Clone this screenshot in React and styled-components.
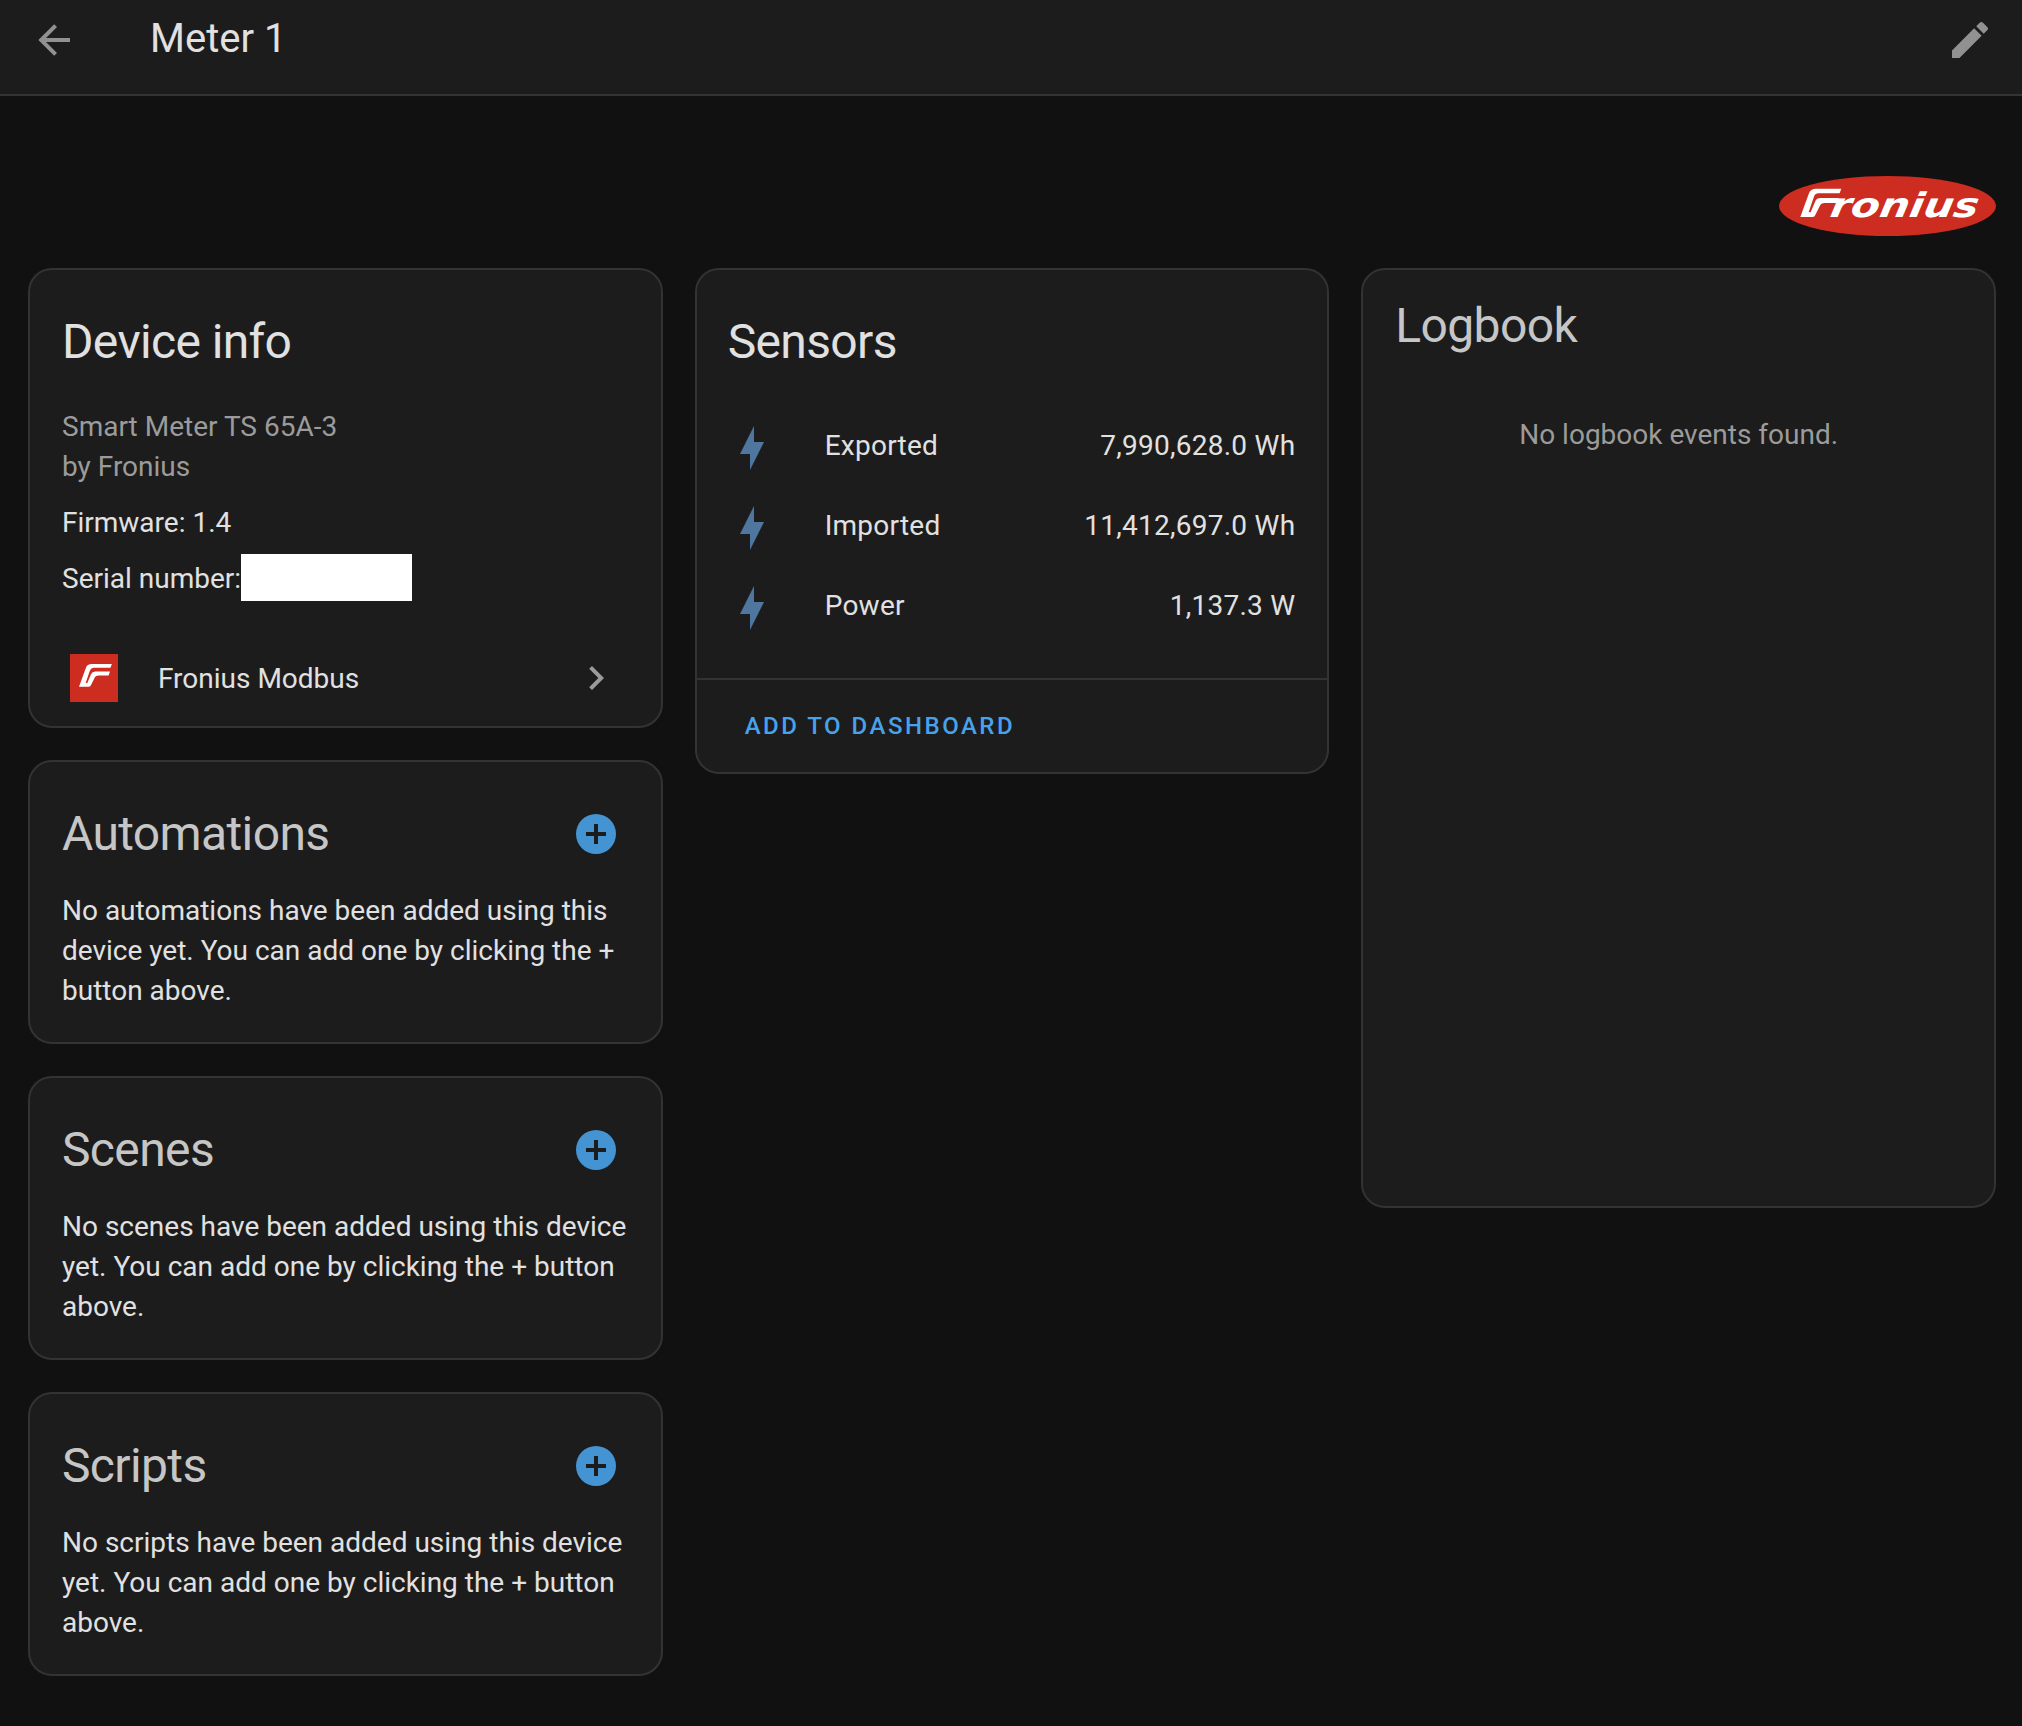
import React from "react";
import styled, { createGlobalStyle } from "styled-components";

const GlobalStyle = createGlobalStyle`
  *, *::before, *::after { box-sizing: border-box; }
  body {
    margin: 0;
    background: #111111;
    color: #e1e1e1;
    font-family: Roboto, "Liberation Sans", sans-serif;
    font-size: 28px;
    line-height: 40px;
    -webkit-font-smoothing: antialiased;
  }
  h1, h2, p { margin: 0; font-weight: 400; }
`;

const Page = styled.div`
  display: flex;
  flex-direction: column;
  min-height: 1726px;
`;

const Toolbar = styled.header`
  display: flex;
  align-items: flex-start;
  height: 96px;
  padding: 16px 28px 0 30px;
  background: #1c1c1c;
  border-bottom: 2px solid #333333;
`;

const IconButton = styled.button`
  display: flex;
  flex: none;
  padding: 0;
  border: 0;
  background: none;
  color: ${(p) => p.$color || "#919191"};
`;

const PageTitle = styled.h1`
  flex: 1;
  margin-left: 72px;
  font-size: 40px;
  line-height: 46px;
`;

const Main = styled.main`
  display: flex;
  flex-direction: column;
  gap: 32px;
  padding: 80px 26px 48px 28px;
`;

const BrandRow = styled.div`
  display: flex;
  justify-content: flex-end;
  height: 60px;
`;

const Columns = styled.div`
  display: grid;
  grid-template-columns: repeat(3, minmax(0, 1fr));
  align-items: start;
  column-gap: 32px;
`;

const Column = styled.div`
  display: flex;
  flex-direction: column;
  gap: 32px;
`;

const Card = styled.section`
  display: flex;
  flex-direction: column;
  height: ${(p) => p.$height || "auto"};
  background: #1c1c1c;
  border: 2px solid #333333;
  border-radius: 24px;
`;

const CardHeader = styled.div`
  display: flex;
  align-items: center;
  justify-content: space-between;
  padding: ${(p) => (p.$compact ? "8px" : "24px")} 41px 0 ${(p) => p.$inset || "32px"};
`;

const CardTitle = styled.h2`
  font-size: 48px;
  line-height: 96px;
  letter-spacing: -0.63px;
  color: ${(p) => (p.$dim ? "#c6c6c6" : "#e1e1e1")};
`;

const CardText = styled.p`
  padding: 9px 32px 31px;
`;

const InfoList = styled.div`
  display: flex;
  flex-direction: column;
  gap: 16px;
  padding: 17px 32px 0;
`;

const Model = styled.div`
  color: #9b9b9b;
`;

const InfoLine = styled.div`
  display: flex;
  align-items: flex-start;
  height: 40px;
  white-space: nowrap;
`;

const Redacted = styled.span`
  width: 171px;
  height: 47px;
  margin-top: -5px;
  background: #ffffff;
`;

const IntegrationRow = styled.a`
  display: flex;
  align-items: center;
  height: 96px;
  margin-top: 31px;
  padding: 0 41px 0 40px;
`;

const IntegrationName = styled.span`
  flex: 1;
  margin-left: 40px;
  padding-top: 1px;
`;

const SensorList = styled.div`
  display: flex;
  flex-direction: column;
  padding: 18px 32px 30px 15px;
  border-bottom: 2px solid #333333;
  letter-spacing: 0.25px;
`;

const SensorRow = styled.div`
  display: flex;
  align-items: center;
  height: 80px;
`;

const SensorBadge = styled.div`
  display: flex;
  flex: none;
  justify-content: center;
  width: 80px;
  color: #4f769f;
`;

const SensorName = styled.span`
  flex: 1;
  margin: 0 0 5px 33px;
`;

const SensorValue = styled.span`
  margin-bottom: 5px;
`;

const CardActions = styled.div`
  display: flex;
  align-items: center;
  height: 92px;
  padding: 0 48px;
`;

const TextButton = styled.button`
  padding: 0;
  border: 0;
  background: none;
  color: #48a2eb;
  font: 500 24px/40px Roboto, "Liberation Sans", sans-serif;
  letter-spacing: 2.5px;
  text-transform: uppercase;
`;

const EmptyNote = styled.p`
  padding-top: 41px;
  color: #9b9b9b;
  text-align: center;
`;

const paths = {
  back: "M20,11V13H8L13.5,18.5L12.08,19.92L4.16,12L12.08,4.08L13.5,5.5L8,11H20Z",
  pencil:
    "M20.71,7.04C21.1,6.65 21.1,6 20.71,5.63L18.37,3.29C18,2.9 17.35,2.9 16.96,3.29L15.12,5.12L18.87,8.87M3,17.25V21H6.75L17.81,9.93L14.06,6.18L3,17.25Z",
  chevron: "M8.59,16.58L13.17,12L8.59,7.41L10,6L16,12L10,18L8.59,16.58Z",
  plusCircle:
    "M17,13H13V17H11V13H7V11H11V7H13V11H17M12,2A10,10 0 0,0 2,12A10,10 0 0,0 12,22A10,10 0 0,0 22,12A10,10 0 0,0 12,2Z",
  bolt: "M11 15H6L13 1V9H18L11 23V15Z",
};

const Icon = ({ name }) => (
  <svg width="48" height="48" viewBox="0 0 24 24" fill="currentColor" aria-hidden="true">
    <path d={paths[name]} />
  </svg>
);

const Emblem = ({ transform }) => (
  <path
    transform={transform}
    fill="#ffffff"
    d="M0,85L26,14Q31,0 47,0L123,0L118,14L55,14Q45,14 41,24L25,71L31,71L45,38Q49,28 61,28L116,28L111,43L73,43Q63,43 60,49L45,79Q43,85 37,85Z"
  />
);

const BrandLogo = () => (
  <svg width="217" height="60" viewBox="0 0 217 60" role="img" aria-label="Fronius">
    <ellipse cx="108.5" cy="30" rx="108.5" ry="30" fill="#cd2c20" />
    <Emblem transform="translate(21.3 12.7) scale(0.3333)" />
    <text
      transform="translate(50 41) skewX(-10)"
      fill="#ffffff"
      fontFamily="DejaVu Sans, sans-serif"
      fontWeight="700"
      fontStyle="italic"
      fontSize="34"
      letterSpacing="0"
      textLength="148"
      lengthAdjust="spacingAndGlyphs"
    >
      ronius
    </text>
  </svg>
);

const BrandIcon = () => (
  <svg width="48" height="48" viewBox="0 0 48 48" aria-hidden="true">
    <rect width="48" height="48" fill="#cd2c20" />
    <Emblem transform="translate(9 10) scale(0.267)" />
  </svg>
);

const sensors = [
  { name: "Exported", value: "7,990,628.0 Wh" },
  { name: "Imported", value: "11,412,697.0 Wh" },
  { name: "Power", value: "1,137.3 W" },
];

const related = [
  { title: "Automations", kind: "automations" },
  { title: "Scenes", kind: "scenes" },
  { title: "Scripts", kind: "scripts" },
];

export default function App() {
  return (
    <Page>
      <GlobalStyle />
      <Toolbar>
        <IconButton aria-label="Back">
          <Icon name="back" />
        </IconButton>
        <PageTitle>Meter 1</PageTitle>
        <IconButton aria-label="Edit">
          <Icon name="pencil" />
        </IconButton>
      </Toolbar>
      <Main>
        <BrandRow>
          <BrandLogo />
        </BrandRow>
        <Columns>
          <Column>
            <Card>
              <CardHeader>
                <CardTitle>Device info</CardTitle>
              </CardHeader>
              <InfoList>
                <Model>
                  <div>Smart Meter TS 65A-3</div>
                  <div>by Fronius</div>
                </Model>
                <InfoLine>Firmware: 1.4</InfoLine>
                <InfoLine>
                  Serial number:
                  <Redacted />
                </InfoLine>
              </InfoList>
              <IntegrationRow>
                <BrandIcon />
                <IntegrationName>Fronius Modbus</IntegrationName>
                <IconButton as="span" $color="#9b9b9b">
                  <Icon name="chevron" />
                </IconButton>
              </IntegrationRow>
            </Card>
            {related.map(({ title, kind }) => (
              <Card key={kind}>
                <CardHeader>
                  <CardTitle $dim>{title}</CardTitle>
                  <IconButton $color="#4494d3" aria-label="Add">
                    <Icon name="plusCircle" />
                  </IconButton>
                </CardHeader>
                <CardText>
                  {`No ${kind} have been added using this device yet. You can add one by clicking the + button above.`}
                </CardText>
              </Card>
            ))}
          </Column>
          <Card>
            <CardHeader $inset="31px">
              <CardTitle>Sensors</CardTitle>
            </CardHeader>
            <SensorList>
              {sensors.map(({ name, value }) => (
                <SensorRow key={name}>
                  <SensorBadge>
                    <Icon name="bolt" />
                  </SensorBadge>
                  <SensorName>{name}</SensorName>
                  <SensorValue>{value}</SensorValue>
                </SensorRow>
              ))}
            </SensorList>
            <CardActions>
              <TextButton>Add to dashboard</TextButton>
            </CardActions>
          </Card>
          <Card $height="940px">
            <CardHeader $compact>
              <CardTitle $dim>Logbook</CardTitle>
            </CardHeader>
            <EmptyNote>No logbook events found.</EmptyNote>
          </Card>
        </Columns>
      </Main>
    </Page>
  );
}
